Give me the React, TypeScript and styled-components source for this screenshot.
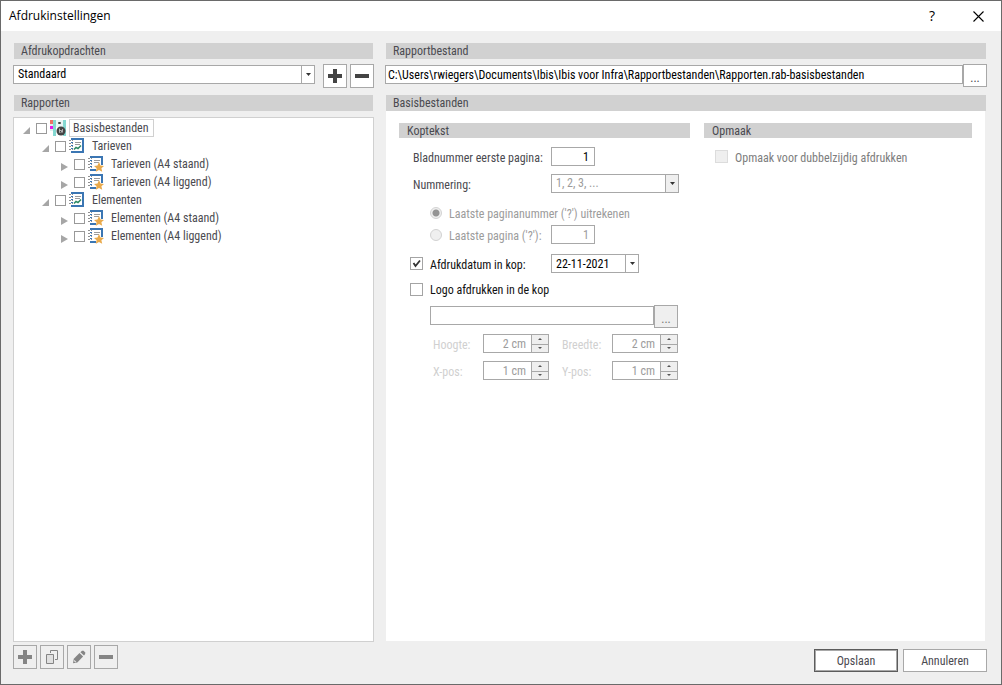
import React, { useState } from "react";
import styled, { createGlobalStyle, css } from "styled-components";

const color = {
  frame: "#6a6a6a",
  surface: "#efefef",
  bar: "#d1d1d1",
  line: "#a8a8a8",
  soft: "#d0d0d0",
  text: "#4a4a50",
  muted: "#9c9c9c",
  faint: "#d0d0d0",
  glyph: "#444444",
};

const uiFont = `"Roboto Condensed", "Liberation Sans", Arial, sans-serif`;

const GlobalStyle = createGlobalStyle`
  *, *::before, *::after { box-sizing: border-box; }
  body {
    margin: 0;
    font: 12px/16px ${uiFont};
    color: ${color.text};
    background: ${color.surface};
  }
  button, input, select { font: inherit; color: inherit; margin: 0; border-radius: 0; }
  svg { display: block; }
`;

const Dialog = styled.div`
  display: flex;
  flex-direction: column;
  min-height: 100vh;
  border: 1px solid ${color.frame};
  background: ${color.surface};
`;

const TitleBar = styled.header`
  display: flex;
  align-items: center;
  height: 30px;
  padding: 0 10px 0 8px;
  background: #fff;
  color: #000;
`;

const Title = styled.h1`
  flex: 1;
  margin: 0;
  font: 400 12px/16px "Open Sans", "Noto Sans", sans-serif;
`;

const CaptionButton = styled.button`
  display: grid;
  place-items: center;
  width: 26px;
  height: 28px;
  margin-left: 20px;
  padding: 0;
  border: 0;
  background: none;
  font: 500 14px/16px "Open Sans", "Noto Sans", sans-serif;
`;

const Columns = styled.main`
  flex: 1;
  display: grid;
  grid-template-columns: 361fr 602fr;
  gap: 11px;
  padding: 12px 14px 12px 12px;
`;

const Column = styled.section`
  display: flex;
  flex-direction: column;
  min-width: 0;
`;

const SectionBar = styled.h2`
  flex: none;
  height: 16px;
  margin: 0 1px;
  padding: 0 7px;
  background: ${color.bar};
  font: 400 12px/17px ${uiFont};
`;

const PickerRow = styled.div<{ $gap?: number }>`
  display: flex;
  align-items: flex-start;
  gap: ${(p) => p.$gap ?? 0}px;
  height: 24px;
  margin: 5px 0 7px;
`;

const SelectBox = styled.span<{ $width?: number; $off?: boolean }>`
  display: grid;
  grid-template-columns: 1fr 13px;
  height: 19px;
  border: 1px solid ${color.line};
  background: #fff;
  color: ${(p) => (p.$off ? color.muted : "#000")};
  ${(p) =>
    p.$width
      ? css`
          width: ${p.$width}px;
        `
      : css`
          flex: 1;
          margin: 1px 5px 0 0;
        `}
`;

const Select = styled.select`
  grid-area: 1 / 1 / 2 / 3;
  appearance: none;
  width: 100%;
  padding: 0 16px 0 4px;
  border: 0;
  background: transparent;
  opacity: 1;
  line-height: 17px;
`;

const DropMark = styled.span<{ $off?: boolean }>`
  grid-area: 1 / 2;
  display: grid;
  place-items: center;
  border-left: 1px solid ${color.line};
  background: ${(p) => (p.$off ? color.surface : "#fff")};
  pointer-events: none;
`;

const DropButton = styled.button`
  display: grid;
  place-items: center;
  padding: 0;
  border: 0;
  border-left: 1px solid ${color.line};
  background: #fff;
`;

const DateInput = styled.input`
  min-width: 0;
  padding: 0 4px;
  border: 0;
  background: none;
  color: #000;
`;

const IconButton = styled.button<{ $off?: boolean }>`
  display: grid;
  place-items: center;
  width: 24px;
  height: 24px;
  padding: 0;
  border: 1px solid ${color.line};
  background: ${(p) => (p.$off ? color.surface : "#fff")};
  color: ${(p) => (p.$off ? "#858585" : color.glyph)};
`;

const TextInput = styled.input<{ $width?: number; $right?: boolean }>`
  height: 19px;
  min-width: 0;
  border: 1px solid ${color.line};
  background: #fff;
  color: #000;
  ${(p) => (p.$width ? `width: ${p.$width}px;` : "flex: 1; margin-top: 1px;")}
  padding: ${(p) => (p.$right ? "0 5px" : "0 2px")};
  text-align: ${(p) => (p.$right ? "right" : "left")};
  &:disabled { color: ${color.muted}; }
`;

const BrowseButton = styled.button`
  width: 24px;
  height: 23px;
  padding: 4px 0 0;
  border: 1px solid ${color.line};
  background: #fff;
  line-height: 12px;
  &:disabled { background: ${color.surface}; color: #777; }
`;

const TreePanel = styled.div`
  flex: 1;
  margin-top: 6px;
  padding: 1px 0 0 7px;
  border: 1px solid ${color.soft};
  background: #fff;
`;

const TreeList = styled.ul<{ $nested?: boolean }>`
  margin: 0;
  padding: 0 0 0 ${(p) => (p.$nested ? 19 : 0)}px;
  list-style: none;
`;

const TreeRow = styled.div`
  display: flex;
  align-items: center;
  height: 18px;
`;

const Twisty = styled.button`
  display: grid;
  place-items: end center;
  width: 9px;
  height: 18px;
  margin-right: 6px;
  padding: 0 0 2px;
  border: 0;
  background: none;
`;

const TreeLabel = styled.label`
  display: flex;
  align-items: center;
  gap: 3px;
`;

const TreeText = styled.span<{ $focus?: boolean }>`
  height: 18px;
  padding: 0 4px 0 3px;
  border: 1px solid ${(p) => (p.$focus ? color.soft : "transparent")};
  line-height: 17px;
`;

const CheckWrap = styled.span`
  display: grid;
  flex: none;
  > * { grid-area: 1 / 1; }
  > svg { pointer-events: none; }
`;

const CheckBox = styled.input<{ $small?: boolean }>`
  appearance: none;
  flex: none;
  width: ${(p) => (p.$small ? 11 : 13)}px;
  height: ${(p) => (p.$small ? 11 : 13)}px;
  border: 1px solid ${(p) => (p.$small ? "#999" : "#a4a4a4")};
  background: #fff;
  &:disabled { background: ${color.surface}; border-color: #dcdcdc; }
`;

const Radio = styled.input`
  && { border-radius: 50%; }
  appearance: none;
  flex: none;
  width: 12px;
  height: 12px;
  border: 1px solid #d2d2d2;
  background: ${color.surface};
  &:checked { background: radial-gradient(circle, #949494 3px, ${color.surface} 4px); }
`;

const ToolStrip = styled.div`
  display: flex;
  gap: 3px;
  margin: 3px 0;
`;

const FormPanel = styled.div`
  flex: 1;
  display: grid;
  grid-template-columns: 291fr 268fr;
  align-items: start;
  gap: 14px;
  margin: 0 2px 0 1px;
  padding: 12px 13px;
  background: #fff;
`;

const FormSection = styled.section`
  display: flex;
  flex-direction: column;
  gap: 10px;
  min-width: 0;
`;

const FormBar = styled(SectionBar)`
  height: 15px;
  margin: 0 0 -1px;
  padding: 0 8px;
`;

const Stack = styled.div<{ $gap: number }>`
  display: flex;
  flex-direction: column;
  gap: ${(p) => p.$gap}px;
`;

const FieldRow = styled.div<{ $tall?: boolean }>`
  display: grid;
  grid-template-columns: 152px auto;
  justify-content: start;
  align-items: center;
  height: ${(p) => (p.$tall ? 20 : 19)}px;
`;

const FieldLabel = styled.label<{ $pad: number; $gap?: number; $tone?: string }>`
  display: flex;
  align-items: center;
  gap: ${(p) => p.$gap ?? 0}px;
  padding-left: ${(p) => p.$pad}px;
  color: ${(p) => p.$tone ?? color.text};
  white-space: nowrap;
`;

const Caption = styled.span`
  padding-top: 2px;
`;

const DateBox = styled.span`
  display: grid;
  grid-template-columns: 1fr 13px;
  width: 88px;
  height: 19px;
  border: 1px solid ${color.line};
`;

const FileRow = styled.div`
  display: flex;
  align-items: flex-start;
  width: 248px;
  margin-left: 31px;
`;

const SizeGrid = styled.div`
  display: grid;
  grid-template-columns: 50px 66px 63px 66px;
  row-gap: 8px;
  margin-left: 34px;
  > label:nth-of-type(even) { padding-left: 13px; }
`;

const SizeLabel = styled.label`
  padding-top: 3px;
  color: ${color.faint};
`;

const SpinBox = styled.span`
  display: grid;
  grid-template-columns: 1fr 17px;
  grid-template-rows: 1fr 1fr;
  height: 19px;
  border: 1px solid ${color.line};
`;

const SpinInput = styled.input`
  grid-row: 1 / 3;
  min-width: 0;
  width: 100%;
  padding: 0 5px;
  border: 0;
  background: #fff;
  color: ${color.muted};
  text-align: right;
`;

const SpinButton = styled.button`
  display: grid;
  place-items: center;
  min-height: 0;
  padding: 0;
  border: 0;
  border-left: 1px solid ${color.line};
  background: ${color.surface};
  & + & { border-top: 1px solid ${color.line}; }
`;

const Actions = styled.footer`
  display: flex;
  justify-content: flex-end;
  gap: 5px;
  margin-top: 8px;
`;

const ActionButton = styled.button<{ $primary?: boolean }>`
  width: 84px;
  height: 23px;
  padding: 1px 0 0;
  border: 1px solid ${(p) => (p.$primary ? "#5c5c5c" : color.line)};
  box-shadow: ${(p) => (p.$primary ? `inset 0 0 0 1px ${color.line}` : "none")};
  background: #fff;
`;

const DropArrow = () => (
  <svg width="5" height="3" viewBox="0 0 5 3">
    <path d="M0 0h5L2.5 3z" fill="#333" />
  </svg>
);

const SpinArrow = ({ up }: { up?: boolean }) => (
  <svg width="4" height="2" viewBox="0 0 4 2">
    <path d={up ? "M0 2h4L2 0z" : "M0 0h4L2 2z"} fill="#555" />
  </svg>
);

const PlusIcon = () => (
  <svg width="14" height="14" viewBox="0 0 14 14">
    <path d="M5 0h4v5h5v4H9v5H5V9H0V5h5z" fill="currentColor" />
  </svg>
);

const MinusIcon = () => (
  <svg width="14" height="14" viewBox="0 0 14 14">
    <path d="M0 5h14v4H0z" fill="currentColor" />
  </svg>
);

const CopyIcon = () => (
  <svg width="14" height="16" viewBox="0 0 14 16">
    <path d="M5.5 4V1.5h7v9H10" fill="none" stroke="currentColor" />
    <path d="M1.5 5.5h7v9h-7z" fill="#e0e0e0" stroke="currentColor" />
  </svg>
);

const PencilIcon = () => (
  <svg width="14" height="14" viewBox="0 0 14 14">
    <path d="M1 13.2l.8-4.400L7.500 3l3.600 3.600-5.800 5.800z" fill="currentColor" />
    <path d="M8.400 2.200L10 .8h1.600l1.600 1.600V4L12 5.600z" fill="currentColor" />
    <path d="M1.800 11l1.600 1.600.9-.9-1.800-1.800z" fill="#e4e4e4" />
  </svg>
);

const CloseIcon = () => (
  <svg width="11" height="11" viewBox="0 0 11 11">
    <path d="M.5.5l10 10M10.500.5l-10 10" stroke="#000" strokeWidth="1.1" />
  </svg>
);

const RootIcon = () => (
  <svg width="16" height="16" viewBox="0 0 16 16">
    <path d="M0 4h3v2H0zM0 9h3v2H0z" fill="#dff0ee" />
    <path d="M3 0h3v16H3zM13 0h3v16h-3z" fill="#84d8d1" />
    <path d="M0 0h3v4H0z" fill="#ee7264" />
    <path d="M0 6h3v3H0z" fill="#e815e8" />
    <path d="M6 0h7v7H6z" fill="#eaf5f4" />
    <rect x="8" y="2" width="3" height="2" rx="1" fill="#444" />
    <circle cx="11" cy="11" r="4.500" fill="#444" />
    <path d="M9.500 8.500v4h1M9.500 10.500h2v2M12.500 9v3.500" fill="none" stroke="#ccc" strokeWidth=".8" />
  </svg>
);

const BookIcon = ({ star }: { star?: boolean }) => (
  <svg width="16" height="16" viewBox="0 0 16 16">
    <path d={star ? "M2 0h13v9h-2V2H4v13H2z" : "M2 0h13v15H2zM4 2v11h9V2z"} fill="#3b76b3" fillRule="evenodd" />
    <path d={star ? "M4 13h4v2H4z" : "M0 0"} fill="#3b76b3" />
    <path d="M1 2h3v2H1zM1 5h3v2H1zM1 8h3v2H1zM1 11h3v2H1z" fill="#fff" />
    <path d="M0 2.500h4M0 5.500h4M0 8.500h4M0 11.500h4" stroke="#909090" strokeDasharray="2 1" />
    <path d="M6 4.500h6M6 6.500h5" stroke="#9c9c9c" />
    {star ? (
      <path d="M11 6l1.500 3.600 3.500.3-2.600 2.300.8 3.600L11 13.900l-3.200 1.900.8-3.600L6 9.900l3.500-.3z" fill="#e9aa4c" />
    ) : (
      <path d="M5 11.500l2-2 2 1 3-3" fill="none" stroke="#2f8a64" strokeWidth="1.500" />
    )}
  </svg>
);

type Node = { id: string; label: string; kind: "root" | "group" | "report"; children?: Node[] };

const reports: Node = {
  id: "root",
  label: "Basisbestanden",
  kind: "root",
  children: [
    {
      id: "tar",
      label: "Tarieven",
      kind: "group",
      children: [
        { id: "tar-s", label: "Tarieven (A4 staand)", kind: "report" },
        { id: "tar-l", label: "Tarieven (A4 liggend)", kind: "report" },
      ],
    },
    {
      id: "el",
      label: "Elementen",
      kind: "group",
      children: [
        { id: "el-s", label: "Elementen (A4 staand)", kind: "report" },
        { id: "el-l", label: "Elementen (A4 liggend)", kind: "report" },
      ],
    },
  ],
};

const TreeNode = ({ node }: { node: Node }) => {
  const [open, setOpen] = useState(node.kind !== "report");
  return (
    <li>
      <TreeRow>
        <Twisty type="button" aria-label={node.label} aria-expanded={open} onClick={() => setOpen(!open)}>
          <svg width="8" height="8" viewBox="0 0 8 8">
            <path d={open ? "M8 0v7H1z" : "M1 0l7 4-7 4z"} fill="#a6a6a6" />
          </svg>
        </Twisty>
        <TreeLabel>
          <CheckBox type="checkbox" $small />
          {node.kind === "root" ? <RootIcon /> : <BookIcon star={node.kind === "report"} />}
          <TreeText $focus={node.kind === "root"}>{node.label}</TreeText>
        </TreeLabel>
      </TreeRow>
      {open && node.children && (
        <TreeList $nested>
          {node.children.map((c) => (
            <TreeNode key={c.id} node={c} />
          ))}
        </TreeList>
      )}
    </li>
  );
};

const SizeField = ({ id, label, value }: { id: string; label: string; value: string }) => (
  <>
    <SizeLabel htmlFor={id}>{label}</SizeLabel>
    <SpinBox>
      <SpinInput id={id} defaultValue={value} disabled />
      <SpinButton type="button" disabled aria-label={`${label} +`}>
        <SpinArrow up />
      </SpinButton>
      <SpinButton type="button" disabled aria-label={`${label} -`}>
        <SpinArrow />
      </SpinButton>
    </SpinBox>
  </>
);

export default function App() {
  const [printDate, setPrintDate] = useState(true);

  return (
    <>
      <GlobalStyle />
      <Dialog role="dialog" aria-labelledby="title">
        <TitleBar>
          <Title id="title">Afdrukinstellingen</Title>
          <CaptionButton type="button">?</CaptionButton>
          <CaptionButton type="button" aria-label="Sluiten">
            <CloseIcon />
          </CaptionButton>
        </TitleBar>

        <Columns>
          <Column>
            <SectionBar>Afdrukopdrachten</SectionBar>
            <PickerRow $gap={3}>
              <SelectBox>
                <Select aria-label="Afdrukopdracht">
                  <option>Standaard</option>
                </Select>
                <DropMark>
                  <DropArrow />
                </DropMark>
              </SelectBox>
              <IconButton type="button" aria-label="Toevoegen">
                <PlusIcon />
              </IconButton>
              <IconButton type="button" aria-label="Verwijderen">
                <MinusIcon />
              </IconButton>
            </PickerRow>

            <SectionBar>Rapporten</SectionBar>
            <TreePanel>
              <TreeList>
                <TreeNode node={reports} />
              </TreeList>
            </TreePanel>
            <ToolStrip>
              <IconButton type="button" $off disabled aria-label="Toevoegen">
                <PlusIcon />
              </IconButton>
              <IconButton type="button" $off disabled aria-label="Kopiëren">
                <CopyIcon />
              </IconButton>
              <IconButton type="button" $off disabled aria-label="Bewerken">
                <PencilIcon />
              </IconButton>
              <IconButton type="button" $off disabled aria-label="Verwijderen">
                <MinusIcon />
              </IconButton>
            </ToolStrip>
          </Column>

          <Column>
            <SectionBar>Rapportbestand</SectionBar>
            <PickerRow>
              <TextInput
                aria-label="Rapportbestand"
                defaultValue={"C:\\Users\\rwiegers\\Documents\\Ibis\\Ibis voor Infra\\Rapportbestanden\\Rapporten.rab-basisbestanden"}
              />
              <BrowseButton type="button">...</BrowseButton>
            </PickerRow>

            <SectionBar>Basisbestanden</SectionBar>
            <FormPanel>
              <FormSection>
                <FormBar>Koptekst</FormBar>
                <Stack $gap={8}>
                  <FieldRow>
                    <FieldLabel $pad={14} htmlFor="first">
                      <Caption>Bladnummer eerste pagina:</Caption>
                    </FieldLabel>
                    <TextInput id="first" $width={44} $right defaultValue="1" />
                  </FieldRow>
                  <FieldRow>
                    <FieldLabel $pad={14} htmlFor="numbering">
                      <Caption>Nummering:</Caption>
                    </FieldLabel>
                    <SelectBox $width={128} $off>
                      <Select id="numbering" disabled>
                        <option>1, 2, 3, ...</option>
                      </Select>
                      <DropMark $off>
                        <DropArrow />
                      </DropMark>
                    </SelectBox>
                  </FieldRow>
                </Stack>

                <Stack $gap={3}>
                  <FieldRow>
                    <FieldLabel $pad={31} $gap={7} $tone={color.muted}>
                      <Radio type="radio" name="last" defaultChecked disabled />
                      <Caption>Laatste paginanummer ('?') uitrekenen</Caption>
                    </FieldLabel>
                  </FieldRow>
                  <FieldRow>
                    <FieldLabel $pad={31} $gap={7} $tone={color.muted}>
                      <Radio type="radio" name="last" disabled />
                      <Caption>Laatste pagina ('?'):</Caption>
                    </FieldLabel>
                    <TextInput aria-label="Laatste pagina" $width={44} $right defaultValue="1" disabled />
                  </FieldRow>
                </Stack>

                <Stack $gap={6}>
                  <FieldRow>
                    <FieldLabel $pad={11} $gap={7} $tone="#111">
                      <CheckWrap>
                        <CheckBox type="checkbox" checked={printDate} onChange={(e) => setPrintDate(e.target.checked)} />
                        {printDate && (
                          <svg width="13" height="13" viewBox="0 0 13 13">
                            <path d="M3.500 6l2 3 4.500-5.500" fill="none" stroke="#333" strokeWidth="1.800" />
                          </svg>
                        )}
                      </CheckWrap>
                      <Caption>Afdrukdatum in kop:</Caption>
                    </FieldLabel>
                    <DateBox>
                      <DateInput aria-label="Afdrukdatum" defaultValue="22-11-2021" />
                      <DropButton type="button" aria-label="Kalender">
                        <DropArrow />
                      </DropButton>
                    </DateBox>
                  </FieldRow>
                  <FieldRow $tall>
                    <FieldLabel $pad={11} $gap={7} $tone="#111">
                      <CheckBox type="checkbox" />
                      <Caption>Logo afdrukken in de kop</Caption>
                    </FieldLabel>
                  </FieldRow>
                  <FileRow>
                    <TextInput aria-label="Logobestand" disabled />
                    <BrowseButton type="button" disabled>
                      ...
                    </BrowseButton>
                  </FileRow>
                  <SizeGrid>
                    <SizeField id="h" label="Hoogte:" value="2 cm" />
                    <SizeField id="w" label="Breedte:" value="2 cm" />
                    <SizeField id="x" label="X-pos:" value="1 cm" />
                    <SizeField id="y" label="Y-pos:" value="1 cm" />
                  </SizeGrid>
                </Stack>
              </FormSection>

              <FormSection>
                <FormBar>Opmaak</FormBar>
                <FieldRow>
                  <FieldLabel $pad={11} $gap={7} $tone="#7d7d7d">
                    <CheckBox type="checkbox" disabled />
                    <Caption>Opmaak voor dubbelzijdig afdrukken</Caption>
                  </FieldLabel>
                </FieldRow>
              </FormSection>
            </FormPanel>

            <Actions>
              <ActionButton type="button" $primary>
                Opslaan
              </ActionButton>
              <ActionButton type="button">Annuleren</ActionButton>
            </Actions>
          </Column>
        </Columns>
      </Dialog>
    </>
  );
}
